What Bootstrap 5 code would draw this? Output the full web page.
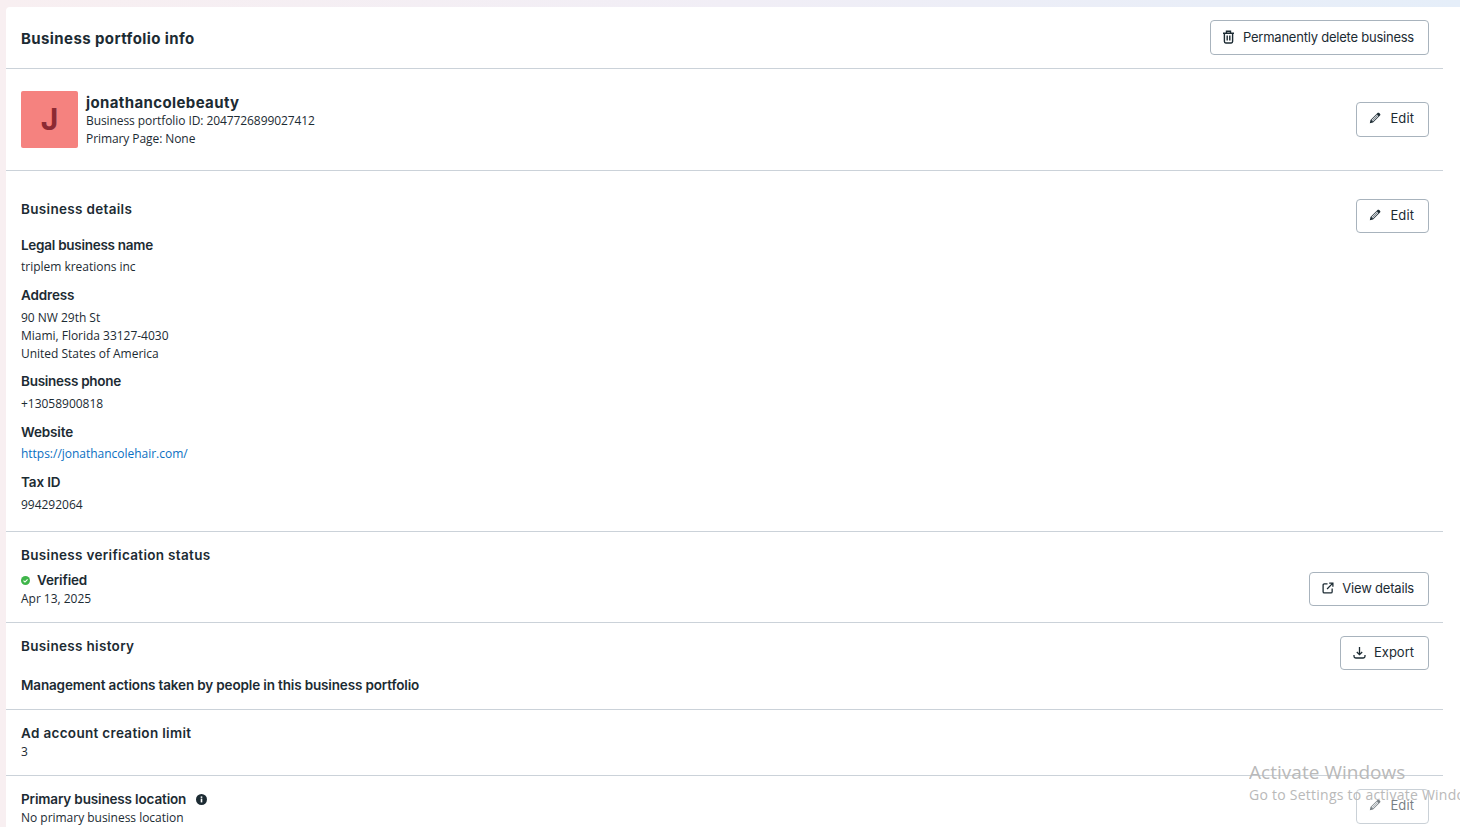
<!DOCTYPE html>
<html lang="en">
<head>
<meta charset="utf-8">
<title>Business portfolio info</title>
<link href="https://cdn.jsdelivr.net/npm/bootstrap@5.3.0/dist/css/bootstrap.min.css" rel="stylesheet">
<style>
html,body{height:827px;overflow:hidden}
body{background:linear-gradient(90deg,#f8eff1 0%,#f1eef6 50%,#e5eef9 100%);font-family:"Open Sans","Noto Sans",sans-serif;font-size:12px;line-height:18px;letter-spacing:-.02px;color:#1c2b33}
.shell{margin:7px 0 0 6px;background:#fff;border-radius:4px 0 0 0;height:820px;overflow:hidden}
.sect{width:1437px;padding-left:15px;padding-right:14px;border-bottom:1px solid #cbd2d9}
.sect:last-child{border-bottom:0}
.h-main,.h-sub,.h-lab,.h-name{font-family:Inter,"Noto Sans",sans-serif;color:#1c2b33}
.h-main{font-size:15px;font-weight:700;line-height:20px;letter-spacing:.4px;margin:3px 0 0}
.h-name{font-size:15px;font-weight:700;line-height:18px;letter-spacing:.38px}
.h-sub{font-size:13.5px;font-weight:600;line-height:18px;letter-spacing:.32px;margin:0}
.h-lab{font-size:13.5px;font-weight:600;line-height:18px;letter-spacing:-.15px;margin:0}
.lab-tight{letter-spacing:-.27px}
.sect-head{height:62px}
.sect-prof{height:102px}
.sect-det{height:361px;padding-top:29px}
.sect-ver{height:91px;padding-top:14px}
.sect-hist{height:87px;padding-top:14px}
.sect-lim{height:66px;padding-top:14px}
.sect-pri{padding-top:14px}
.avatar{width:57px;height:57px;background:#f5827f;border-radius:2px;color:#8c2a33;font-family:Inter,sans-serif;font-weight:700;font-size:30px;line-height:1;padding-bottom:2px}
.prof-txt{line-height:18px;margin-top:3px;letter-spacing:-.08px}
.act{height:34px;border:1px solid #a8b3bd;border-radius:4px;background:#fff;color:#1c2b33;font-family:Inter,"Noto Sans",sans-serif;font-size:13px;line-height:16px;letter-spacing:-.23px;padding:0 14px 2px 11px;gap:8px;white-space:nowrap}
.act svg{flex:none}
.act-tall{height:35px;padding-bottom:3px}
.act-del{height:35px;padding-bottom:1px}
.act-edit{padding-left:12px;gap:9px;letter-spacing:.1px}
.act-det{margin-top:-1px}
.act-ver{margin-bottom:16px;letter-spacing:-.2px;padding-left:12px}
.act-hist{margin-top:-1px;letter-spacing:0;padding-left:12px}
.act-pri{margin-top:-1px;opacity:.6}
.field{margin-top:9px}
.field-first{margin-top:18px}
.field-web,.field-tax{margin-top:10px}
.lab-gap{margin-bottom:5px}
.lab-web,.lab-first{margin-bottom:4px}
.web{color:#0a6fc2;text-decoration:none}
.stat{margin-top:7px;margin-bottom:1px}
.dot{width:9px;height:9px;margin-right:7px}
.info{margin-left:10px}
.mgmt{margin-top:21px}
.val-one{margin-top:1px}
.ver-date{margin-bottom:14px}
.win{position:absolute;left:1249px;top:761px;color:#b9b9b9;font-family:"Open Sans",sans-serif;white-space:nowrap;pointer-events:none;width:211px;overflow:hidden;letter-spacing:.03px}
.win-a{font-size:19px;line-height:23px}
.win-b{font-size:14px;line-height:21px;letter-spacing:.25px}
</style>
</head>
<body>
<main class="shell">
  <section class="sect sect-head d-flex align-items-center justify-content-between">
    <h1 class="h-main">Business portfolio info</h1>
    <button type="button" class="act act-del d-inline-flex align-items-center">
      <svg width="13" height="14" viewBox="0 0 13 14" fill="none" stroke="#1c2b33" stroke-width="1.4"><path d="M1 3.200h11M4.500 3V1.200h4V3M2.400 3.200v8.400c0 .8.5 1.400 1.300 1.400h5.600c.8 0 1.300-.6 1.300-1.400V3.200M5.200 5.600v5M7.800 5.600v5"/></svg>
      Permanently delete business
    </button>
  </section>
  <section class="sect sect-prof d-flex align-items-center justify-content-between">
    <div class="d-flex align-items-center">
      <div class="avatar d-flex align-items-center justify-content-center me-2">J</div>
      <div class="prof-txt">
        <div class="h-name">jonathancolebeauty</div>
        <div>Business portfolio ID: 2047726899027412</div>
        <div>Primary Page: None</div>
      </div>
    </div>
    <button type="button" class="act act-tall act-edit d-inline-flex align-items-center">
      <svg width="12" height="12" viewBox="0 0 12 12" fill="#1c2b33"><path d="M.8 11.200l.7-3.200L8.500 1c.5-.5 1.200-.5 1.700 0l.8.8c.5.5.5 1.200 0 1.700L4 10.500zM2.500 8.100l1.400 1.400 5.500-5.500-1.400-1.400z" fill-rule="evenodd"/><path d="M3 8.400l.6.600 5.300-5.300-.6-.6z" fill="#6b7780"/></svg>
      Edit
    </button>
  </section>
  <section class="sect sect-det d-flex justify-content-between align-items-start">
    <div>
      <h2 class="h-sub">Business details</h2>
      <div class="field-first">
        <h3 class="h-lab lab-tight lab-first">Legal business name</h3>
        <div>triplem kreations inc</div>
      </div>
      <div class="field-web">
        <h3 class="h-lab lab-gap">Address</h3>
        <div>90 NW 29th St</div>
        <div>Miami, Florida 33127-4030</div>
        <div>United States of America</div>
      </div>
      <div class="field">
        <h3 class="h-lab lab-tight lab-gap">Business phone</h3>
        <div>+13058900818</div>
      </div>
      <div class="field-web">
        <h3 class="h-lab lab-web">Website</h3>
        <a class="web" href="#">https://jonathancolehair.com/</a>
      </div>
      <div class="field-tax">
        <h3 class="h-lab lab-gap">Tax ID</h3>
        <div>994292064</div>
      </div>
    </div>
    <button type="button" class="act act-edit act-det d-inline-flex align-items-center">
      <svg width="12" height="12" viewBox="0 0 12 12" fill="#1c2b33"><path d="M.8 11.200l.7-3.200L8.500 1c.5-.5 1.200-.5 1.700 0l.8.8c.5.5.5 1.200 0 1.700L4 10.500zM2.500 8.100l1.400 1.400 5.500-5.500-1.400-1.400z" fill-rule="evenodd"/><path d="M3 8.400l.6.600 5.300-5.300-.6-.6z" fill="#6b7780"/></svg>
      Edit
    </button>
  </section>
  <section class="sect sect-ver d-flex justify-content-between align-items-end">
    <div>
      <h2 class="h-sub">Business verification status</h2>
      <div class="d-flex align-items-center stat">
        <svg class="dot" viewBox="0 0 10 10"><circle cx="5" cy="5" r="5" fill="#3fb54a"/><path d="M2.800 5.100l1.600 1.600 2.900-3" fill="none" stroke="#fff" stroke-width="1.200"/></svg>
        <span class="h-lab">Verified</span>
      </div>
      <div class="ver-date">Apr 13, 2025</div>
    </div>
    <button type="button" class="act act-ver d-inline-flex align-items-center">
      <svg width="12" height="12" viewBox="0 0 13 13" fill="none" stroke="#1c2b33" stroke-width="1.400"><path d="M6 2H2.500C1.700 2 1.200 2.500 1.200 3.300v7.200c0 .8.5 1.300 1.300 1.300h7.200c.8 0 1.300-.5 1.300-1.300V7"/><path d="M5.500 7.500L11.500 1.500M7.800 1.200h4v4"/></svg>
      View details
    </button>
  </section>
  <section class="sect sect-hist d-flex justify-content-between align-items-start">
    <div>
      <h2 class="h-sub">Business history</h2>
      <h3 class="h-lab mgmt">Management actions taken by people in this business portfolio</h3>
    </div>
    <button type="button" class="act act-hist d-inline-flex align-items-center">
      <svg width="13" height="13" viewBox="0 0 13 13" fill="none" stroke="#1c2b33" stroke-width="1.300"><path d="M6.500 1v7.500M3.800 6l2.700 2.700L9.200 6M1 9v1.300c0 1 .7 1.700 1.700 1.700h7.600c1 0 1.700-.7 1.700-1.700V9"/></svg>
      Export
    </button>
  </section>
  <section class="sect sect-lim">
    <h2 class="h-sub">Ad account creation limit</h2>
    <div class="val-one">3</div>
  </section>
  <section class="sect sect-pri d-flex justify-content-between align-items-start">
    <div>
      <div class="d-flex align-items-center">
        <h2 class="h-lab">Primary business location</h2>
        <svg class="info" width="11" height="11" viewBox="0 0 11 11"><circle cx="5.500" cy="5.500" r="5.500" fill="#1c2b33"/><rect x="4.700" y="4.600" width="1.600" height="3.800" fill="#fff"/><rect x="4.700" y="2.400" width="1.600" height="1.500" fill="#fff"/></svg>
      </div>
      <div class="val-one">No primary business location</div>
    </div>
    <button type="button" class="act act-tall act-edit act-pri d-inline-flex align-items-center">
      <svg width="12" height="12" viewBox="0 0 12 12" fill="#1c2b33"><path d="M.8 11.200l.7-3.200L8.500 1c.5-.5 1.200-.5 1.700 0l.8.8c.5.5.5 1.200 0 1.700L4 10.500zM2.500 8.100l1.400 1.400 5.500-5.500-1.400-1.400z" fill-rule="evenodd"/><path d="M3 8.400l.6.600 5.300-5.300-.6-.6z" fill="#6b7780"/></svg>
      Edit
    </button>
  </section>
</main>
<div class="win">
  <div class="win-a">Activate Windows</div>
  <div class="win-b">Go to Settings to activate Windows.</div>
</div>
</body>
</html>
